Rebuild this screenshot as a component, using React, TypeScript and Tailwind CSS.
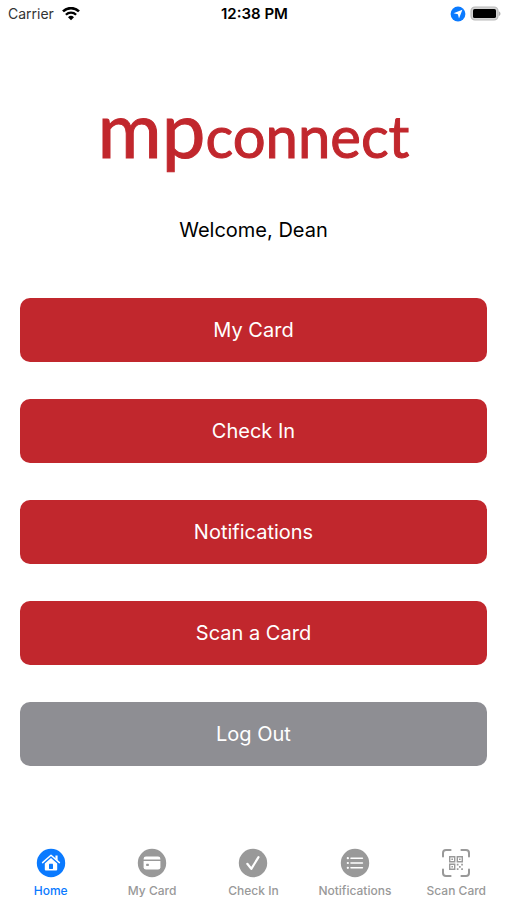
import { useState, type ReactNode } from "react";

const actions = ["My Card", "Check In", "Notifications", "Scan a Card"];

function WifiIcon() {
  return (
    <svg viewBox="0 0 18 14" className="h-3.5 w-[18px]" fill="none" stroke="black" aria-hidden="true">
      <path d="M1 4.4a11.4 11.4 0 0 1 16 0" strokeWidth="2.6" />
      <path d="M3.9 7.8a7.2 7.2 0 0 1 10.2 0" strokeWidth="2.3" />
      <path d="M9 13.2 6 10.2a4.3 4.3 0 0 1 6 0Z" fill="black" stroke="none" />
    </svg>
  );
}

function LocationIcon() {
  return (
    <svg viewBox="0 0 16 16" className="size-4" aria-hidden="true">
      <circle cx="8" cy="8" r="7.4" fill="#0a7aff" />
      <path d="M12.4 3.7 9 12.6 7.9 8.3 3.5 7.3Z" fill="white" />
    </svg>
  );
}

function BatteryIcon() {
  return (
    <svg viewBox="0 0 31 16" className="h-4 w-[31px]" aria-hidden="true">
      <rect x="1" y="1" width="27" height="13" rx="4" fill="#d4d4d4" stroke="#b9b9b9" strokeWidth="1.2" />
      <rect x="3" y="2.9" width="23" height="9.2" rx="1.6" fill="black" />
      <path d="M28.8 5.2c2.2.8 2.2 4 0 4.8Z" fill="#b0b0b0" />
    </svg>
  );
}

function Disc({ children }: { children: ReactNode }) {
  return (
    <svg viewBox="0 0 30 30" className="size-[30px]" fill="none" aria-hidden="true">
      <circle cx="15" cy="15" r="14.2" fill="currentColor" />
      {children}
    </svg>
  );
}

const tabs: { label: string; icon: ReactNode }[] = [
  {
    label: "Home",
    icon: (
      <Disc>
        <path d="M6.6 14.6 15 7.2l8.4 7.4" stroke="white" strokeWidth="1.5" strokeLinecap="round" strokeLinejoin="round" />
        <path d="M19.4 7.6h2.2v4.8l-2.2-1.9Z" fill="white" />
        <path d="M8.8 15.4 15 10l6.2 5.4v6.1q0 1-1 1H9.8q-1 0-1-1Z" fill="white" />
        <rect x="13" y="15.8" width="4" height="5.2" rx=".4" fill="currentColor" />
      </Disc>
    ),
  },
  {
    label: "My Card",
    icon: (
      <Disc>
        <path d="M6.6 11.4V11q0-2.4 2.4-2.4h12q2.4 0 2.4 2.4v.4Z" fill="white" />
        <path d="M6.6 13h16.8v6.2q0 2.4-2.4 2.4H9q-2.4 0-2.4-2.4Z" fill="white" />
        <rect x="9.2" y="15.8" width="2.6" height="2.2" rx=".5" fill="currentColor" />
      </Disc>
    ),
  },
  {
    label: "Check In",
    icon: (
      <Disc>
        <path d="m9.3 15.8 4 5 7.2-11.6" stroke="white" strokeWidth="2.2" strokeLinecap="round" strokeLinejoin="round" />
      </Disc>
    ),
  },
  {
    label: "Notifications",
    icon: (
      <Disc>
        <path d="M11 10.2h11.4M11 15h11.4M11 19.8h11.4" stroke="white" strokeWidth="1.6" strokeLinecap="round" />
        <path d="M7.8 10.2h.1M7.8 15h.1M7.8 19.8h.1" stroke="white" strokeWidth="2.2" strokeLinecap="round" />
      </Disc>
    ),
  },
  {
    label: "Scan Card",
    icon: (
      <svg viewBox="0 0 30 30" className="size-[30px]" fill="none" stroke="currentColor" aria-hidden="true">
        <path
          d="M2 8.6V5q0-3 3-3h4.6M20.4 2H25q3 0 3 3v3.6M28 21.4V25q0 3-3 3h-4.6M9.6 28H5q-3 0-3-3v-3.6"
          strokeWidth="2"
          strokeLinecap="round"
        />
        <path d="M8.7 8.7h5v5h-5ZM16.3 8.7h5v5h-5ZM8.7 16.3h5v5h-5Z" strokeWidth="1.4" />
        <path
          d="M10.4 10.4H12V12h-1.6ZM18 10.4h1.6V12H18ZM10.4 18H12v1.6h-1.6ZM15.8 15.8h1.7v1.7h-1.7ZM20.2 15.8h1.7v1.7h-1.7ZM18 18h1.7v1.7H18ZM15.8 20.2h1.7v1.7h-1.7ZM20.2 20.2h1.7v1.7h-1.7Z"
          fill="currentColor"
          stroke="none"
        />
      </svg>
    ),
  },
];

export default function App() {
  const [active, setActive] = useState("Home");

  return (
    <div className="flex min-h-screen flex-col bg-white font-['Inter',sans-serif] text-black">
      <header className="grid h-7 grid-cols-[1fr_auto_1fr] items-center pr-1.5 pl-2 text-sm">
        <div className="flex items-center gap-2 text-[#333]">
          Carrier
          <WifiIcon />
        </div>
        <time className="text-center text-[15px] font-semibold">12:38 PM</time>
        <div className="flex items-center justify-end gap-1">
          <LocationIcon />
          <BatteryIcon />
        </div>
      </header>

      <main className="flex flex-1 flex-col px-5 pt-[60px]">
        <h1 className="text-center font-['Lato',sans-serif] text-[58px] leading-[80px] text-[#c1272d] [-webkit-text-stroke:1px_#c1272d]">
          <span className="text-[78px]">mp</span>connect
        </h1>
        <p className="mt-[38px] text-center text-xl leading-8">Welcome, Dean</p>
        <div className="mt-[52px] flex flex-col gap-[37px] text-xl text-white">
          {actions.map((label) => (
            <button key={label} type="button" className="h-16 rounded-[10px] bg-[#c1272d]">
              {label}
            </button>
          ))}
          <button type="button" className="h-16 rounded-[10px] bg-[#8e8e93]">
            Log Out
          </button>
        </div>
      </main>

      <nav className="grid grid-cols-5 pb-px">
        {tabs.map(({ label, icon }) => (
          <button
            key={label}
            type="button"
            onClick={() => setActive(label)}
            aria-current={active === label ? "page" : undefined}
            className={`flex flex-col items-center gap-[5px] text-xs font-medium ${
              active === label ? "text-[#0a7aff]" : "text-[#999]"
            }`}
          >
            {icon}
            {label}
          </button>
        ))}
      </nav>
    </div>
  );
}
